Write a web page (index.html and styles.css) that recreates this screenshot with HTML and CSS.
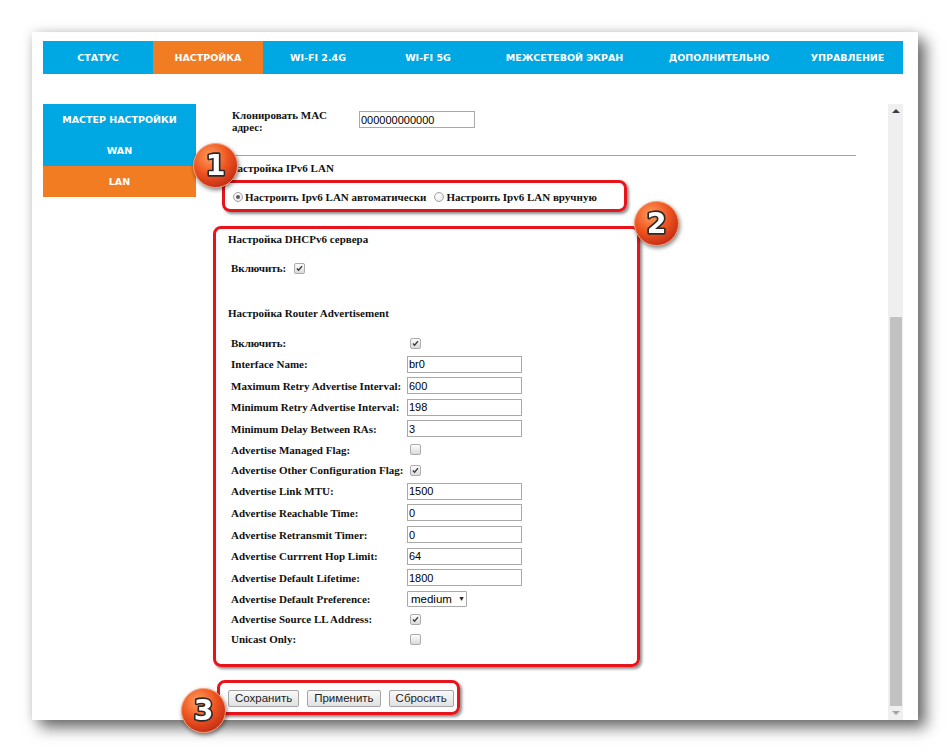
FILE: index.html
```html
<!DOCTYPE html>
<html lang="ru">
<head>
<meta charset="utf-8">
<title>Настройка IPv6 LAN</title>
<link rel="stylesheet" href="styles.css">
</head>
<body>
<div class="window">
  <nav class="topnav">
    <div class="tab">СТАТУС</div>
    <div class="tab active">НАСТРОЙКА</div>
    <div class="tab">WI-FI 2.4G</div>
    <div class="tab">WI-FI 5G</div>
    <div class="tab wide">МЕЖСЕТЕВОЙ ЭКРАН</div>
    <div class="tab wide">ДОПОЛНИТЕЛЬНО</div>
    <div class="tab last">УПРАВЛЕНИЕ</div>
  </nav>
  <div class="main">
    <aside class="sidebar">
      <div class="side-item">МАСТЕР НАСТРОЙКИ</div>
      <div class="side-item">WAN</div>
      <div class="side-item active">LAN</div>
    </aside>
    <div class="pane">
      <div class="content">
        <div class="mac-row">
          <div class="mac-label">Клонировать MAC адрес:</div>
          <div class="txt mac">000000000000</div>
        </div>
        <div class="rule"></div>
        <div class="heading h-ipv6">Настройка IPv6 LAN</div>
        <div class="radio-row">
          <span class="radio on"></span><span class="radio-text">Настроить Ipv6 LAN автоматически</span>
          <span class="radio second"></span><span class="radio-text">Настроить Ipv6 LAN вручную</span>
        </div>
        <div class="heading h-dhcp">Настройка DHCPv6 сервера</div>
        <div class="enable-row">
          <span class="enable-label">Включить:</span>
          <span class="cb"><svg viewBox="0 0 11 11"><path d="M2.3 5.6 L4.4 7.7 L8.6 2.6"/></svg></span>
        </div>
        <div class="heading h-router">Настройка Router Advertisement</div>
        <div class="table">
          <div class="row r-cb"><span class="lbl">Включить:</span><span class="cb"><svg viewBox="0 0 11 11"><path d="M2.3 5.6 L4.4 7.7 L8.6 2.6"/></svg></span></div>
          <div class="row r-in"><span class="lbl">Interface Name:</span><span class="txt">br0</span></div>
          <div class="row r-in"><span class="lbl">Maximum Retry Advertise Interval:</span><span class="txt">600</span></div>
          <div class="row r-in"><span class="lbl">Minimum Retry Advertise Interval:</span><span class="txt">198</span></div>
          <div class="row r-in"><span class="lbl">Minimum Delay Between RAs:</span><span class="txt">3</span></div>
          <div class="row r-cb"><span class="lbl">Advertise Managed Flag:</span><span class="cb"></span></div>
          <div class="row r-cb"><span class="lbl">Advertise Other Configuration Flag:</span><span class="cb"><svg viewBox="0 0 11 11"><path d="M2.3 5.6 L4.4 7.7 L8.6 2.6"/></svg></span></div>
          <div class="row r-in"><span class="lbl">Advertise Link MTU:</span><span class="txt">1500</span></div>
          <div class="row r-in"><span class="lbl">Advertise Reachable Time:</span><span class="txt">0</span></div>
          <div class="row r-in"><span class="lbl">Advertise Retransmit Timer:</span><span class="txt">0</span></div>
          <div class="row r-in"><span class="lbl">Advertise Currrent Hop Limit:</span><span class="txt">64</span></div>
          <div class="row r-in"><span class="lbl">Advertise Default Lifetime:</span><span class="txt">1800</span></div>
          <div class="row r-cb"><span class="lbl">Advertise Default Preference:</span><span class="select">medium<span class="arrow">▼</span></span></div>
          <div class="row r-cb"><span class="lbl">Advertise Source LL Address:</span><span class="cb"><svg viewBox="0 0 11 11"><path d="M2.3 5.6 L4.4 7.7 L8.6 2.6"/></svg></span></div>
          <div class="row r-cb"><span class="lbl">Unicast Only:</span><span class="cb"></span></div>
        </div>
        <div class="buttons">
          <button class="btn">Сохранить</button>
          <button class="btn">Применить</button>
          <button class="btn">Сбросить</button>
        </div>
      </div>
      <div class="scrollbar">
        <div class="sb-btn"><span class="tri up"></span></div>
        <div class="sb-track"><div class="sb-thumb"></div></div>
        <div class="sb-btn"><span class="tri down"></span></div>
      </div>
    </div>
  </div>

  <div class="mark m1"></div>
  <div class="mark m2"></div>
  <div class="mark m3"></div>

  <svg class="badge b1" viewBox="0 0 48 48">
    <defs>
      <radialGradient id="g1" cx="38%" cy="30%" r="72%">
        <stop offset="0" stop-color="#ff9d5e"/>
        <stop offset="0.55" stop-color="#ef5520"/>
        <stop offset="1" stop-color="#c42e17"/>
      </radialGradient>
    </defs>
    <circle cx="24" cy="24" r="22.5" fill="url(#g1)" stroke="#f8a47c" stroke-width="1"/>
    <text x="24" y="34" text-anchor="middle" class="num">1</text>
  </svg>
  <svg class="badge b2" viewBox="0 0 48 48">
    <defs>
      <radialGradient id="g2" cx="38%" cy="30%" r="72%">
        <stop offset="0" stop-color="#ff9d5e"/>
        <stop offset="0.55" stop-color="#ef5520"/>
        <stop offset="1" stop-color="#c42e17"/>
      </radialGradient>
    </defs>
    <circle cx="24" cy="24" r="22.5" fill="url(#g2)" stroke="#f8a47c" stroke-width="1"/>
    <text x="24" y="34" text-anchor="middle" class="num">2</text>
  </svg>
  <svg class="badge b3" viewBox="0 0 48 48">
    <defs>
      <radialGradient id="g3" cx="38%" cy="30%" r="72%">
        <stop offset="0" stop-color="#ff9d5e"/>
        <stop offset="0.55" stop-color="#ef5520"/>
        <stop offset="1" stop-color="#c42e17"/>
      </radialGradient>
    </defs>
    <circle cx="24" cy="24" r="22.5" fill="url(#g3)" stroke="#f8a47c" stroke-width="1"/>
    <text x="24" y="34" text-anchor="middle" class="num">3</text>
  </svg>
</div>
</body>
</html>
```

FILE: styles.css
```css
* { box-sizing: border-box; }
html, body { margin: 0; padding: 0; background: #fff; }
body {
  width: 950px;
  height: 754px;
  overflow: hidden;
  font-family: "Liberation Serif", "Times New Roman", serif;
}

.window {
  position: relative;
  margin: 32px 0 0 32px;
  width: 886px;
  height: 688px;
  background: #fff;
  padding: 9px 15px 0 11px;
  box-shadow: 8px 8px 14px rgba(0, 0, 0, 0.55), 0 0 10px rgba(0, 0, 0, 0.15);
}

/* top navigation */
.topnav {
  display: flex;
  height: 33px;
  background: #00a8e3;
  color: #fff;
  font: bold 9.5px "DejaVu Sans", Verdana, sans-serif;
}
.tab {
  flex: 0 0 110px;
  text-align: center;
  line-height: 33px;
  white-space: nowrap;
}
.tab.wide { flex: 1 1 auto; }
.tab.last { flex-basis: 111px; }
.tab.active { background: #f27c21; }

/* main area */
.main {
  display: flex;
  margin-top: 30px;
  height: 616px;
}
.sidebar {
  flex: none;
  width: 153px;
  color: #fff;
  font: bold 9.5px "DejaVu Sans", Verdana, sans-serif;
}
.side-item {
  height: 31px;
  line-height: 31px;
  text-align: center;
  background: #00a8e3;
  white-space: nowrap;
}
.side-item.active { background: #f27c21; }

.pane {
  flex: 1;
  display: flex;
  min-width: 0;
}
.content {
  flex: 1;
  min-width: 0;
  overflow: hidden;
  padding: 5px 0 0 26px;
  color: #111;
  font: bold 11px "Liberation Serif", "Times New Roman", serif;
}

/* MAC row */
.mac-row {
  display: flex;
  align-items: flex-start;
  margin-left: 10px;
}
.mac-label {
  width: 120px;
  line-height: 12px;
}
.txt {
  display: inline-flex;
  align-items: center;
  width: 115px;
  height: 17px;
  border: 1px solid #a9a9a9;
  padding: 0 1px;
  background: #fff;
  color: #000;
  font: 11px "Liberation Sans", Arial, sans-serif;
}
.txt.mac {
  width: 116px;
  margin: 2px 0 0 7px;
}

.rule {
  margin: 22px 32px 0 0;
  border-top: 1px solid #a3a3a3;
}

.heading { line-height: 14px; }
.h-ipv6 { margin: 5px 0 0 7px; }
.h-dhcp { margin: 28px 0 0 6px; }
.h-router { margin: 31px 0 0 6px; }

/* radio row */
.radio-row {
  display: flex;
  align-items: center;
  height: 14px;
  margin: 15px 0 0 11px;
}
.radio {
  flex: none;
  display: inline-flex;
  align-items: center;
  justify-content: center;
  width: 10px;
  height: 10px;
  border: 1px solid #a4a4a4;
  border-radius: 50%;
  background: radial-gradient(circle at 40% 35%, #fff, #e2e2e2);
  margin-right: 2px;
}
.radio.on::after {
  content: "";
  width: 4px;
  height: 4px;
  border-radius: 50%;
  background: #5a5a5a;
}
.radio.second { margin-left: 8px; }
.radio-text { white-space: nowrap; }

/* checkbox */
.cb {
  flex: none;
  display: inline-block;
  width: 11px;
  height: 11px;
  border: 1px solid #acacac;
  border-radius: 2px;
  background: linear-gradient(#fdfdfd, #dadada);
}
.cb svg {
  display: block;
  width: 9px;
  height: 9px;
  fill: none;
  stroke: #3b3b3b;
  stroke-width: 1.7;
}

.enable-row {
  display: flex;
  align-items: center;
  height: 14px;
  margin: 15px 0 0 9px;
}
.enable-label { width: 63px; }

/* settings table */
.table { margin: 13px 0 0 9px; }
.row {
  display: flex;
  align-items: center;
}
.r-cb { height: 20.4px; }
.r-in { height: 21.6px; }
.lbl {
  flex: none;
  width: 176px;
  white-space: nowrap;
}
.row .cb { margin-left: 3px; }

.select {
  display: inline-flex;
  align-items: center;
  width: 60px;
  height: 16px;
  border: 1px solid #a9a9a9;
  border-radius: 1px;
  padding-left: 3px;
  background: #fff;
  color: #000;
  font: 11.5px "Liberation Sans", Arial, sans-serif;
}
.select .arrow {
  margin-left: 6px;
  font-size: 7px;
  color: #222;
}

/* buttons */
.buttons {
  display: flex;
  gap: 8px;
  margin: 40px 0 0 6px;
}
.btn {
  height: 17px;
  padding: 0 6px;
  border: 1px solid #a5a5a5;
  border-radius: 2px;
  background: linear-gradient(#f9f9f9, #e1e1e1);
  color: #222;
  font: 11.5px "Liberation Sans", Arial, sans-serif;
  line-height: 15px;
}

/* fake scrollbar */
.scrollbar {
  flex: none;
  width: 15px;
  display: flex;
  flex-direction: column;
  background: #efefef;
}
.sb-btn {
  height: 14px;
  display: flex;
  align-items: center;
  justify-content: center;
}
.tri {
  width: 0;
  height: 0;
  border-left: 4px solid transparent;
  border-right: 4px solid transparent;
}
.tri.up { border-bottom: 4px solid #3c3c4a; }
.tri.down { border-top: 4px solid #a3a3a3; }
.sb-track {
  flex: 1;
  display: flex;
  flex-direction: column;
  justify-content: flex-end;
  padding: 0 1px 0 2px;
}
.sb-thumb {
  height: 389px;
  background: #c2c2c2;
}

/* annotation overlays */
.mark {
  position: absolute;
  border: 3px solid #e8141c;
  border-radius: 8px;
  box-shadow: 2px 2px 3px rgba(0, 0, 0, 0.45);
}
.m1 { left: 190px; top: 148px; width: 405px; height: 32px; }
.m2 { left: 181px; top: 194px; width: 427px; height: 441px; }
.m3 { left: 185px; top: 648px; width: 243px; height: 35px; }

.badge {
  position: absolute;
  width: 47px;
  height: 47px;
  filter: drop-shadow(1px 2px 2px rgba(0, 0, 0, 0.5));
}
.b1 { left: 160px; top: 110px; }
.b2 { left: 601px; top: 168px; }
.b3 { left: 148px; top: 655px; }
.num {
  font: bold 29px "DejaVu Sans", sans-serif;
  fill: #fff;
  stroke: #2a2a2a;
  stroke-width: 3.4px;
  stroke-linejoin: round;
  paint-order: stroke;
}
```
